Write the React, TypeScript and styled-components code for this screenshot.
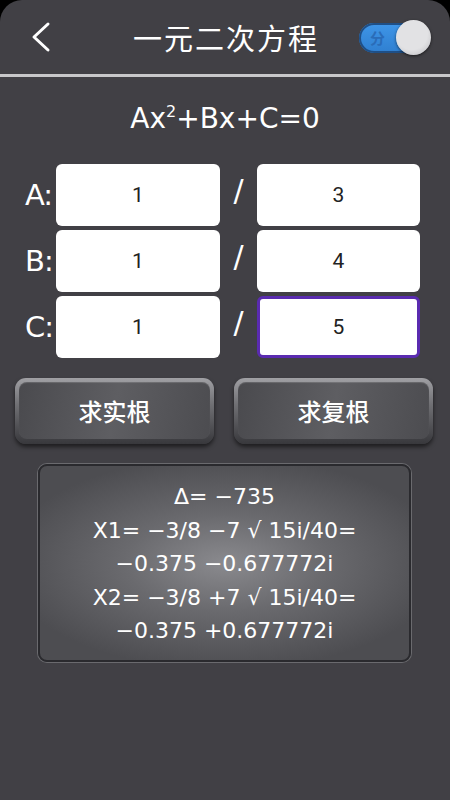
import React from "react";
import styled, { createGlobalStyle } from "styled-components";

const GlobalStyle = createGlobalStyle`
  html, body {
    margin: 0;
    padding: 0;
    background: #000;
  }
  body {
    font-family: "DejaVu Sans", "Noto Sans CJK SC", sans-serif;
  }
`;

const Screen = styled.div`
  width: 450px;
  height: 800px;
  background: #414045;
  border-radius: 22px 22px 0 0;
  overflow: hidden;
  display: flex;
  flex-direction: column;
`;

const Header = styled.div`
  height: 74px;
  display: grid;
  grid-template-columns: 1fr auto 1fr;
  align-items: center;
  padding: 0 19px;
  box-sizing: border-box;
`;

const BackButton = styled.div`
  width: 24px;
  height: 32px;
  margin-left: 11px;
  display: flex;
  align-items: center;
`;

const Title = styled.div`
  color: #ffffff;
  font-family: "Noto Sans CJK SC", sans-serif;
  font-size: 29px;
  letter-spacing: 2px;
  margin-right: -2px;
  margin-top: -1px;
`;

const Toggle = styled.div`
  justify-self: end;
  position: relative;
  width: 72px;
  height: 34px;
`;

const Track = styled.div`
  position: absolute;
  left: 0;
  top: 3px;
  width: 60px;
  height: 30px;
  border-radius: 15px;
  background: linear-gradient(#3f96e8, #2f7fd0);
  box-shadow: inset 0 0 0 2px #1f4f86;
  color: #2a6cb8;
  font-family: "Noto Sans CJK SC", sans-serif;
  font-size: 15px;
  font-weight: 700;
  line-height: 30px;
  padding-left: 11px;
  box-sizing: border-box;
`;

const Thumb = styled.div`
  position: absolute;
  right: 0;
  top: 0;
  width: 35px;
  height: 35px;
  border-radius: 50%;
  background: radial-gradient(circle at 45% 40%, #e2e2e4 55%, #b8b8bc 100%);
  box-shadow: 0 1px 3px rgba(0, 0, 0, 0.6);
`;

const Divider = styled.div`
  height: 3px;
  background: #c8c8ca;
`;

const Equation = styled.div`
  color: #ffffff;
  font-size: 28px;
  text-align: center;
  margin-top: 24px;
  line-height: 36px;

  sup {
    font-size: 16px;
    vertical-align: 0;
    position: relative;
    top: -11px;
  }
`;

const Rows = styled.div`
  display: flex;
  flex-direction: column;
  gap: 4px;
  padding-left: 25px;
  margin-top: 23px;
`;

const Row = styled.div`
  display: flex;
  align-items: center;
  height: 62px;
`;

const Label = styled.div`
  width: 31px;
  color: #ffffff;
  font-size: 29px;
  letter-spacing: -1px;
`;

const Slash = styled.div`
  width: 37px;
  color: #ffffff;
  font-size: 30px;
  text-align: center;
  margin-top: -10px;
`;

const Field = styled.div<{ $focused?: boolean; $w: number }>`
  width: ${(p) => p.$w}px;
  height: 62px;
  box-sizing: border-box;
  background: #ffffff;
  border-radius: 6px;
  border: ${(p) => (p.$focused ? "3px solid #5a2bb0" : "none")};
  display: flex;
  align-items: center;
  justify-content: center;
  color: #222222;
  font-family: "Roboto", sans-serif;
  font-size: 21px;
`;

const Buttons = styled.div`
  display: flex;
  gap: 20px;
  padding: 0 17px 0 15px;
  margin-top: 20px;
`;

const MetalButton = styled.div`
  width: 199px;
  height: 66px;
  box-sizing: border-box;
  border-radius: 11px;
  padding: 4px 4px 5px 4px;
  background: linear-gradient(#a0a0a4, #707074 40%, #38383c);
  box-shadow: 0 3px 4px rgba(0, 0, 0, 0.55);
`;

const ButtonFace = styled.div`
  height: 100%;
  border-radius: 8px;
  background: linear-gradient(100deg, #4a4a4e 0%, #5e5e62 50%, #4c4c50 100%);
  box-shadow: inset 0 1px 1px rgba(255, 255, 255, 0.15);
  display: flex;
  align-items: center;
  justify-content: center;
  color: #ffffff;
  font-family: "Noto Sans CJK SC", sans-serif;
  font-weight: 500;
  font-size: 24px;
`;

const Result = styled.div`
  margin: 20px 0 0 38px;
  width: 373px;
  height: 198px;
  box-sizing: border-box;
  border-radius: 9px;
  border: 2px solid #2a2a2e;
  box-shadow: 0 0 0 1px #6a6a6e;
  background: radial-gradient(ellipse 60% 55% at 50% 50%, #8a8a8e 0%, #6a6a6e 45%, #4d4d51 100%);
  padding-top: 14px;
  color: #ffffff;
  text-align: center;
  font-size: 22px;
  line-height: 33.5px;
`;

const Line = styled.div``;

const rows = [
  { label: "A:", a: "1", b: "3" },
  { label: "B:", a: "1", b: "4" },
  { label: "C:", a: "1", b: "5", focused: true },
];

const lines = [
  "Δ= −735",
  "X1= −3/8 −7 √ 15i/40=",
  "−0.375 −0.677772i",
  "X2= −3/8 +7 √ 15i/40=",
  "−0.375 +0.677772i",
];

export default function App() {
  return (
    <>
      <GlobalStyle />
      <Screen>
        <Header>
          <BackButton>
            <svg width="22" height="32" viewBox="0 0 22 32">
              <polyline
                points="18,3 4,16 18,29"
                fill="none"
                stroke="#fff"
                strokeWidth="3"
                strokeLinecap="round"
                strokeLinejoin="round"
              />
            </svg>
          </BackButton>
          <Title>一元二次方程</Title>
          <Toggle>
            <Track>分</Track>
            <Thumb />
          </Toggle>
        </Header>
        <Divider />
        <Equation>
          Ax<sup>2</sup>+Bx+C=0
        </Equation>
        <Rows>
          {rows.map((r) => (
            <Row key={r.label}>
              <Label>{r.label}</Label>
              <Field $w={164}>{r.a}</Field>
              <Slash>/</Slash>
              <Field $w={163} $focused={r.focused}>
                {r.b}
              </Field>
            </Row>
          ))}
        </Rows>
        <Buttons>
          <MetalButton>
            <ButtonFace>求实根</ButtonFace>
          </MetalButton>
          <MetalButton>
            <ButtonFace>求复根</ButtonFace>
          </MetalButton>
        </Buttons>
        <Result>
          {lines.map((l) => (
            <Line key={l}>{l}</Line>
          ))}
        </Result>
      </Screen>
    </>
  );
}
